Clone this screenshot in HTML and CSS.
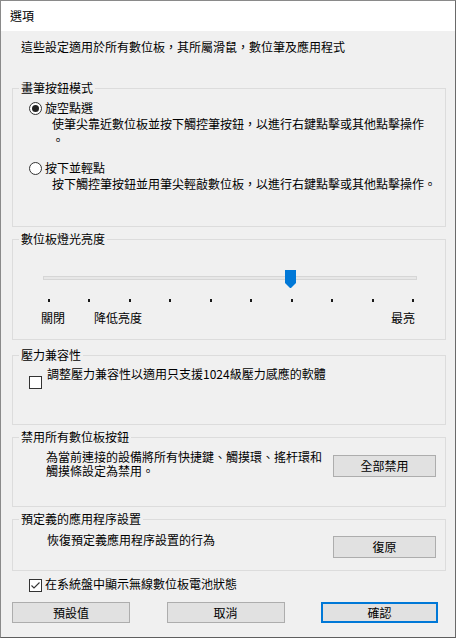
FILE: index.html
```html
<!DOCTYPE html>
<html lang="zh-Hant">
<head>
<meta charset="utf-8">
<title>選項</title>
<link rel="stylesheet" href="styles.css">
</head>
<body>
<div class="window">
  <div class="titlebar">選項</div>
  <div class="content">
    <p class="intro">這些設定適用於所有數位板，其所屬滑鼠，數位筆及應用程式</p>

    <fieldset class="group g-pen">
      <legend>畫筆按鈕模式</legend>
      <div class="opt first">
        <span class="radio checked"></span>
        <span class="opt-label">旋空點選</span>
      </div>
      <div class="opt-desc">使筆尖靠近數位板並按下觸控筆按鈕，以進行右鍵點擊或其他點擊操作<br>。</div>
      <div class="opt second">
        <span class="radio"></span>
        <span class="opt-label">按下並輕點</span>
      </div>
      <div class="opt-desc">按下觸控筆按鈕並用筆尖輕敲數位板，以進行右鍵點擊或其他點擊操作。</div>
    </fieldset>

    <fieldset class="group g-light">
      <legend>數位板燈光亮度</legend>
      <div class="slider">
        <div class="track"></div>
        <svg class="thumb" width="11" height="18" viewBox="0 0 11 18"><polygon points="0,0 11,0 11,13 5.5,18.5 0,13" fill="#0078d7"/></svg>
      </div>
      <div class="ticks">
        <span></span><span></span><span></span><span></span><span></span>
        <span></span><span></span><span></span><span></span><span></span>
      </div>
      <div class="scale">
        <span>關閉</span>
        <span class="low">降低亮度</span>
        <span class="max">最亮</span>
      </div>
    </fieldset>

    <fieldset class="group g-press">
      <legend>壓力兼容性</legend>
      <div class="check-row">
        <span class="checkbox"></span>
        <span class="check-label">調整壓力兼容性以適用只支援1024級壓力感應的軟體</span>
      </div>
    </fieldset>

    <fieldset class="group g-disable">
      <legend>禁用所有數位板按鈕</legend>
      <div class="action-row">
        <p class="action-text multi">為當前連接的設備將所有快捷鍵、觸摸環、搖杆環和觸摸條設定為禁用。</p>
        <button class="btn side">全部禁用</button>
      </div>
    </fieldset>

    <fieldset class="group g-app">
      <legend>預定義的應用程序設置</legend>
      <div class="action-row">
        <p class="action-text single">恢復預定義應用程序設置的行為</p>
        <button class="btn side restore">復原</button>
      </div>
    </fieldset>

    <div class="tray-row">
      <span class="checkbox on">
        <svg width="11" height="11" viewBox="0 0 11 11"><polyline points="1.5,5.5 4,8 9.5,2.5" fill="none" stroke="#333" stroke-width="1.1"/></svg>
      </span>
      <span class="tray-label">在系統盤中顯示無線數位板電池狀態</span>
    </div>

    <div class="footer">
      <button class="btn foot">預設值</button>
      <button class="btn foot">取消</button>
      <button class="btn foot default">確認</button>
    </div>
  </div>
</div>
</body>
</html>
```

FILE: styles.css
```css
* { box-sizing: border-box; }

html, body {
  margin: 0;
  padding: 0;
  background: #f0f0f0;
}

body {
  font-family: "Noto Sans CJK TC", "Noto Sans", sans-serif;
  font-size: 12px;
  line-height: 16px;
  color: #000;
}

.window {
  width: 456px;
  height: 638px;
  border: 1px solid #8a8a8a;
  border-bottom-color: #5e5e5e;
  border-right-color: #6a6a6a;
  background: #f0f0f0;
  overflow: hidden;
}

.titlebar {
  height: 30px;
  line-height: 30px;
  padding-left: 9px;
  background: #fff;
  font-size: 12px;
}

.content {
  padding: 8px 9px 0 11px;
}

.intro {
  margin: 0;
  padding-left: 9px;
  line-height: 16px;
}

.group {
  margin: 0;
  padding: 0;
  min-width: 0;
  border: 1px solid #dcdcdc;
}

.group legend {
  margin-left: 6px;
  padding: 0 2px;
  line-height: 16px;
  font-size: 12px;
}

/* pen mode */
.g-pen { margin-top: 25px; padding-bottom: 34px; }

.opt {
  display: flex;
  align-items: center;
  height: 16px;
  padding-left: 16px;
}
.opt.first { margin-top: 4px; }
.opt.second { margin-top: 12px; }

.radio {
  width: 13px;
  height: 13px;
  border: 1px solid #333;
  border-radius: 50%;
  background: #fff;
  display: flex;
  align-items: center;
  justify-content: center;
}
.radio.checked::after {
  content: "";
  width: 7px;
  height: 7px;
  border-radius: 50%;
  background: #222;
}

.opt-label { margin-left: 3px; }

.opt-desc {
  padding-left: 39px;
  line-height: 16px;
}

/* brightness */
.g-light { margin-top: 4px; padding-bottom: 13px; }

.slider {
  position: relative;
  margin: 23px 0 0 30px;
  padding-top: 6px;
  width: 374px;
  height: 18px;
}
.track {
  height: 4px;
  border: 1px solid #d6d6d6;
  background: #e7e7e7;
}
.thumb {
  position: absolute;
  left: 242px;
  top: 0;
  display: block;
}

.ticks {
  display: flex;
  justify-content: space-between;
  margin: 11px 0 0 35px;
  width: 366px;
  height: 3px;
}
.ticks span {
  width: 2px;
  height: 3px;
  background: #1a1a1a;
}

.scale {
  display: flex;
  margin: 8px 0 0 28px;
  width: 374px;
  line-height: 16px;
}
.scale .low { margin-left: 29px; }
.scale .max { margin-left: auto; }

/* pressure */
.g-press { margin-top: 7px; padding-bottom: 35px; }

.check-row {
  display: flex;
  align-items: flex-start;
  margin-top: 3px;
  padding-left: 16px;
}
.checkbox {
  flex: none;
  width: 13px;
  height: 13px;
  border: 1px solid #333;
  background: #fff;
  display: flex;
  align-items: center;
  justify-content: center;
}
.check-row .checkbox { margin-top: 10px; }
.check-label { margin-left: 5px; line-height: 16px; }

/* disable / restore */
.g-disable { margin-top: 4px; padding-bottom: 28px; }
.g-app { margin-top: 4px; padding-bottom: 12px; }

.action-row {
  display: flex;
  align-items: flex-start;
}
.action-text {
  margin: 5px 0 0 0;
}
.action-text.multi {
  padding-left: 33px;
  width: 313px;
  line-height: 14px;
}
.action-text.single {
  padding-left: 34px;
  line-height: 16px;
}

.btn {
  font-family: inherit;
  font-size: 12px;
  color: #000;
  background: #e1e1e1;
  border: 1px solid #adadad;
  border-radius: 0;
  padding: 0;
  line-height: 16px;
  margin: 0;
}
.btn.side {
  margin: 10px 9px 0 auto;
  width: 103px;
  height: 22px;
}
.btn.side.restore { margin-top: 9px; }

/* tray checkbox */
.tray-row {
  display: flex;
  align-items: flex-start;
  margin-top: 5px;
  padding-left: 17px;
}
.tray-row .checkbox { margin-top: 3px; }
.tray-label { margin-left: 3px; line-height: 16px; }

/* footer */
.footer {
  display: flex;
  justify-content: space-between;
  margin-top: 10px;
  width: 426px;
}
.btn.foot {
  width: 118px;
  height: 21px;
}
.btn.foot.default {
  width: 117px;
  border: 2px solid #0078d7;
}
```
